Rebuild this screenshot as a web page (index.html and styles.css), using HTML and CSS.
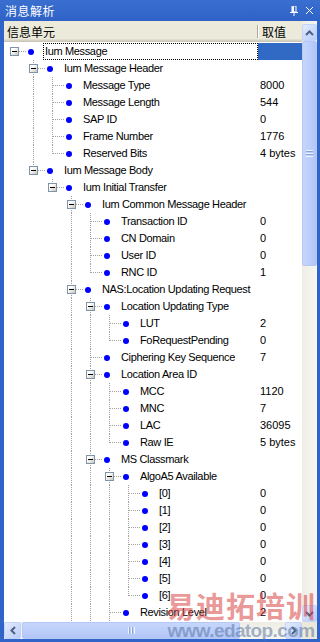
FILE: index.html
```html
<!DOCTYPE html>
<html lang="zh">
<head>
    <meta charset="UTF-8">
    <meta name="viewport" content="width=device-width, initial-scale=1.0">
    <title>消息解析</title>
    <link rel="stylesheet" href="styles.css">
</head>
<body>
<div class="window">
    <div class="titlebar">
        <span class="title">消息解析</span>
        <span class="tb-icons">
            <svg width="9" height="10" viewBox="0 0 9 10"><path d="M2 0h4v6H2z M3 1v4" fill="none" stroke="#fff" stroke-width="1"/><path d="M2.5 0.5v5.5M3.5 0.5v5.5" stroke="#fff"/><path d="M0 6.5h8M4 7v3" stroke="#fff"/></svg>
            <svg width="9" height="9" viewBox="0 0 9 9"><path d="M1 1l7 7M8 1l-7 7" stroke="#fff" stroke-width="1"/></svg>
        </span>
    </div>
    <div class="pane">
        <div class="view">
            <div class="header">
                <div class="hname">信息单元</div>
                <div class="hval">取值</div>
            </div>
            <div class="tree">
                <div class="row sel"><div class="name"><i class="con root"><b class="box"></b></i><i class="dot"></i><span class="label">Ium Message</span></div><div class="val"></div></div>
                <div class="row"><div class="name"><i class="ind"></i><i class="con mid"><b class="box"></b></i><i class="dot"></i><span class="label">Ium Message Header</span></div><div class="val"></div></div>
                <div class="row"><div class="name"><i class="ind"></i><i class="ind v"></i><i class="con mid"></i><i class="dot"></i><span class="label">Message Type</span></div><div class="val">8000</div></div>
                <div class="row"><div class="name"><i class="ind"></i><i class="ind v"></i><i class="con mid"></i><i class="dot"></i><span class="label">Message Length</span></div><div class="val">544</div></div>
                <div class="row"><div class="name"><i class="ind"></i><i class="ind v"></i><i class="con mid"></i><i class="dot"></i><span class="label">SAP ID</span></div><div class="val">0</div></div>
                <div class="row"><div class="name"><i class="ind"></i><i class="ind v"></i><i class="con mid"></i><i class="dot"></i><span class="label">Frame Number</span></div><div class="val">1776</div></div>
                <div class="row"><div class="name"><i class="ind"></i><i class="ind v"></i><i class="con last"></i><i class="dot"></i><span class="label">Reserved Bits</span></div><div class="val">4 bytes</div></div>
                <div class="row"><div class="name"><i class="ind"></i><i class="con last"><b class="box"></b></i><i class="dot"></i><span class="label">Ium Message Body</span></div><div class="val"></div></div>
                <div class="row"><div class="name"><i class="ind"></i><i class="ind"></i><i class="con last"><b class="box"></b></i><i class="dot"></i><span class="label">Ium Initial Transfer</span></div><div class="val"></div></div>
                <div class="row"><div class="name"><i class="ind"></i><i class="ind"></i><i class="ind"></i><i class="con mid"><b class="box"></b></i><i class="dot"></i><span class="label">Ium Common Message Header</span></div><div class="val"></div></div>
                <div class="row"><div class="name"><i class="ind"></i><i class="ind"></i><i class="ind"></i><i class="ind v"></i><i class="con mid"></i><i class="dot"></i><span class="label">Transaction ID</span></div><div class="val">0</div></div>
                <div class="row"><div class="name"><i class="ind"></i><i class="ind"></i><i class="ind"></i><i class="ind v"></i><i class="con mid"></i><i class="dot"></i><span class="label">CN Domain</span></div><div class="val">0</div></div>
                <div class="row"><div class="name"><i class="ind"></i><i class="ind"></i><i class="ind"></i><i class="ind v"></i><i class="con mid"></i><i class="dot"></i><span class="label">User ID</span></div><div class="val">0</div></div>
                <div class="row"><div class="name"><i class="ind"></i><i class="ind"></i><i class="ind"></i><i class="ind v"></i><i class="con last"></i><i class="dot"></i><span class="label">RNC ID</span></div><div class="val">1</div></div>
                <div class="row"><div class="name"><i class="ind"></i><i class="ind"></i><i class="ind"></i><i class="con mid"><b class="box"></b></i><i class="dot"></i><span class="label">NAS:Location Updating Request</span></div><div class="val"></div></div>
                <div class="row"><div class="name"><i class="ind"></i><i class="ind"></i><i class="ind"></i><i class="ind v"></i><i class="con mid"><b class="box"></b></i><i class="dot"></i><span class="label">Location Updating Type</span></div><div class="val"></div></div>
                <div class="row"><div class="name"><i class="ind"></i><i class="ind"></i><i class="ind"></i><i class="ind v"></i><i class="ind v"></i><i class="con mid"></i><i class="dot"></i><span class="label">LUT</span></div><div class="val">2</div></div>
                <div class="row"><div class="name"><i class="ind"></i><i class="ind"></i><i class="ind"></i><i class="ind v"></i><i class="ind v"></i><i class="con last"></i><i class="dot"></i><span class="label">FoRequestPending</span></div><div class="val">0</div></div>
                <div class="row"><div class="name"><i class="ind"></i><i class="ind"></i><i class="ind"></i><i class="ind v"></i><i class="con mid"></i><i class="dot"></i><span class="label">Ciphering Key Sequence</span></div><div class="val">7</div></div>
                <div class="row"><div class="name"><i class="ind"></i><i class="ind"></i><i class="ind"></i><i class="ind v"></i><i class="con mid"><b class="box"></b></i><i class="dot"></i><span class="label">Location Area ID</span></div><div class="val"></div></div>
                <div class="row"><div class="name"><i class="ind"></i><i class="ind"></i><i class="ind"></i><i class="ind v"></i><i class="ind v"></i><i class="con mid"></i><i class="dot"></i><span class="label">MCC</span></div><div class="val">1120</div></div>
                <div class="row"><div class="name"><i class="ind"></i><i class="ind"></i><i class="ind"></i><i class="ind v"></i><i class="ind v"></i><i class="con mid"></i><i class="dot"></i><span class="label">MNC</span></div><div class="val">7</div></div>
                <div class="row"><div class="name"><i class="ind"></i><i class="ind"></i><i class="ind"></i><i class="ind v"></i><i class="ind v"></i><i class="con mid"></i><i class="dot"></i><span class="label">LAC</span></div><div class="val">36095</div></div>
                <div class="row"><div class="name"><i class="ind"></i><i class="ind"></i><i class="ind"></i><i class="ind v"></i><i class="ind v"></i><i class="con last"></i><i class="dot"></i><span class="label">Raw IE</span></div><div class="val">5 bytes</div></div>
                <div class="row"><div class="name"><i class="ind"></i><i class="ind"></i><i class="ind"></i><i class="ind v"></i><i class="con mid"><b class="box"></b></i><i class="dot"></i><span class="label">MS Classmark</span></div><div class="val"></div></div>
                <div class="row"><div class="name"><i class="ind"></i><i class="ind"></i><i class="ind"></i><i class="ind v"></i><i class="ind v"></i><i class="con mid"><b class="box"></b></i><i class="dot"></i><span class="label">AlgoA5 Available</span></div><div class="val"></div></div>
                <div class="row"><div class="name"><i class="ind"></i><i class="ind"></i><i class="ind"></i><i class="ind v"></i><i class="ind v"></i><i class="ind v"></i><i class="con mid"></i><i class="dot"></i><span class="label">[0]</span></div><div class="val">0</div></div>
                <div class="row"><div class="name"><i class="ind"></i><i class="ind"></i><i class="ind"></i><i class="ind v"></i><i class="ind v"></i><i class="ind v"></i><i class="con mid"></i><i class="dot"></i><span class="label">[1]</span></div><div class="val">0</div></div>
                <div class="row"><div class="name"><i class="ind"></i><i class="ind"></i><i class="ind"></i><i class="ind v"></i><i class="ind v"></i><i class="ind v"></i><i class="con mid"></i><i class="dot"></i><span class="label">[2]</span></div><div class="val">0</div></div>
                <div class="row"><div class="name"><i class="ind"></i><i class="ind"></i><i class="ind"></i><i class="ind v"></i><i class="ind v"></i><i class="ind v"></i><i class="con mid"></i><i class="dot"></i><span class="label">[3]</span></div><div class="val">0</div></div>
                <div class="row"><div class="name"><i class="ind"></i><i class="ind"></i><i class="ind"></i><i class="ind v"></i><i class="ind v"></i><i class="ind v"></i><i class="con mid"></i><i class="dot"></i><span class="label">[4]</span></div><div class="val">0</div></div>
                <div class="row"><div class="name"><i class="ind"></i><i class="ind"></i><i class="ind"></i><i class="ind v"></i><i class="ind v"></i><i class="ind v"></i><i class="con mid"></i><i class="dot"></i><span class="label">[5]</span></div><div class="val">0</div></div>
                <div class="row"><div class="name"><i class="ind"></i><i class="ind"></i><i class="ind"></i><i class="ind v"></i><i class="ind v"></i><i class="ind v"></i><i class="con last"></i><i class="dot"></i><span class="label">[6]</span></div><div class="val">0</div></div>
                <div class="row"><div class="name"><i class="ind"></i><i class="ind"></i><i class="ind"></i><i class="ind v"></i><i class="ind v"></i><i class="con mid"></i><i class="dot"></i><span class="label">Revision Level</span></div><div class="val">2</div></div>
            </div>
        </div>
        <div class="vscroll">
            <div class="sbtn">
                <svg width="9" height="6" viewBox="0 0 9 6"><path d="M1 5l3.5-3.5L8 5" fill="none" stroke="#4d6185" stroke-width="2"/></svg>
            </div>
            <div class="vthumb"><span class="grip-v"></span></div>
            <div class="track"></div>
            <div class="sbtn">
                <svg width="9" height="6" viewBox="0 0 9 6"><path d="M1 1l3.5 3.5L8 1" fill="none" stroke="#4d6185" stroke-width="2"/></svg>
            </div>
        </div>
        <div class="hscroll">
            <div class="sbtn">
                <svg width="6" height="9" viewBox="0 0 6 9"><path d="M5 1L1.5 4.5L5 8" fill="none" stroke="#4d6185" stroke-width="2"/></svg>
            </div>
            <div class="hthumb"><span class="grip-h"></span></div>
            <div class="track"></div>
            <div class="sbtn">
                <svg width="6" height="9" viewBox="0 0 6 9"><path d="M1 1l3.5 3.5L1 8" fill="none" stroke="#4d6185" stroke-width="2"/></svg>
            </div>
        </div>
        <div class="corner"></div>
    </div>
    <div class="watermark">
        <div class="wm-cn">易迪拓培训</div>
        <div class="wm-url">www.edatop.com</div>
    </div>
</div>
</body>
</html>
```

FILE: styles.css
```css
body {
    margin: 0;
    padding: 0;
    font-family: "Liberation Sans", Arial, "Noto Sans CJK SC", sans-serif;
    font-size: 11px;
    color: #000;
}

.window {
    position: relative;
    width: 320px;
    height: 642px;
    background: #3064c8;
    display: flex;
    flex-direction: column;
    overflow: hidden;
}

/* title bar */
.titlebar {
    height: 21px;
    flex: none;
    display: flex;
    align-items: center;
    justify-content: space-between;
    padding: 0 6px 0 5px;
    background: linear-gradient(to bottom, #3a6fd0, #2f62c6);
    color: #fff;
}

.title {
    font-family: "Noto Sans CJK SC", sans-serif;
    font-size: 12px;
    letter-spacing: 0.5px;
    line-height: 21px;
}

.tb-icons {
    display: flex;
    align-items: center;
    gap: 6px;
}

/* main pane */
.pane {
    flex: 1;
    margin: 0 3px 3px 4px;
    display: grid;
    grid-template-columns: 298px 15px;
    grid-template-rows: 1fr 17px;
    background: #fff;
    min-height: 0;
}

.view {
    display: flex;
    flex-direction: column;
    overflow: hidden;
}

.header {
    height: 21px;
    flex: none;
    display: flex;
    font-family: "Noto Sans CJK SC", sans-serif;
    font-size: 12px;
    background: linear-gradient(to bottom, #ebeadb 0 18px, #e2decd 18px 19px, #d6d2c2 19px 20px, #cbc7b8 20px 21px);
}

.hname {
    width: 253px;
    padding: 1px 0 0 3px;
    box-sizing: border-box;
    line-height: 19px;
}

.hval {
    flex: 1;
    padding: 1px 0 0 5px;
    line-height: 19px;
    background:
        linear-gradient(#aca899, #aca899) no-repeat 0 4px / 1px 13px,
        linear-gradient(#fff, #fff) no-repeat 1px 4px / 1px 13px;
}

.tree {
    flex: 1;
    padding-top: 1px;
    overflow: hidden;
}

.row {
    display: flex;
    height: 17px;
}

.name {
    width: 254px;
    flex: none;
    display: flex;
    align-items: center;
    padding-left: 1px;
    box-sizing: border-box;
    overflow: hidden;
}

.ind {
    width: 19px;
    height: 17px;
    flex: none;
}

.ind.v {
    background: repeating-linear-gradient(to bottom, #a0a0a0 0 1px, transparent 1px 2px) no-repeat 9px 0 / 1px 17px;
}

.con {
    width: 22px;
    height: 17px;
    flex: none;
    display: flex;
    align-items: center;
    background-repeat: no-repeat;
}

.con.mid {
    background-image:
        repeating-linear-gradient(to bottom, #a0a0a0 0 1px, transparent 1px 2px),
        repeating-linear-gradient(to right, #a0a0a0 0 1px, transparent 1px 2px);
    background-size: 1px 17px, 12px 1px;
    background-position: 9px 0, 10px 8px;
}

.con.last {
    background-image:
        repeating-linear-gradient(to bottom, #a0a0a0 0 1px, transparent 1px 2px),
        repeating-linear-gradient(to right, #a0a0a0 0 1px, transparent 1px 2px);
    background-size: 1px 9px, 12px 1px;
    background-position: 9px 0, 10px 8px;
}

.con.root {
    background-image: repeating-linear-gradient(to right, #a0a0a0 0 1px, transparent 1px 2px);
    background-size: 12px 1px;
    background-position: 10px 8px;
}

.box {
    width: 9px;
    height: 9px;
    margin-left: 5px;
    box-sizing: border-box;
    border: 1px solid #7f94a8;
    background: linear-gradient(135deg, #ffffff 30%, #c9c6b8);
    display: flex;
    align-items: center;
    justify-content: center;
}

.box::after {
    content: "";
    width: 5px;
    height: 1px;
    background: #000;
}

.dot {
    width: 6px;
    height: 6px;
    flex: none;
    margin-left: 1px;
    border-radius: 50%;
    background: #0000ff;
}

.label {
    flex: none;
    margin-left: 9px;
    padding: 0 1px;
    border: 1px solid transparent;
    line-height: 15px;
    letter-spacing: -0.35px;
    white-space: nowrap;
}

.row.sel .label {
    flex: 1;
    border: 1px dotted #000;
}

.val {
    flex: 1;
    padding-left: 2px;
    line-height: 17px;
    white-space: nowrap;
    overflow: hidden;
}

.row.sel .val {
    background: #316ac5;
}

/* scrollbars */
.vscroll {
    grid-row: 1 / 2;
    grid-column: 2;
    display: flex;
    flex-direction: column;
    padding-top: 3px;
    background: linear-gradient(to right, #eeede5, #f7f6f2);
}

.hscroll {
    grid-row: 2;
    grid-column: 1;
    display: flex;
    background: linear-gradient(to bottom, #eeede5, #f7f6f2);
}

.corner {
    grid-row: 2;
    grid-column: 2;
    background: #ece9d8;
}

.sbtn {
    flex: none;
    width: 15px;
    height: 17px;
    box-sizing: border-box;
    border: 1px solid #c3d3fd;
    border-radius: 2px;
    background: linear-gradient(135deg, #e3ebfe, #b9ccf8);
    display: flex;
    align-items: center;
    justify-content: center;
}

.hscroll .sbtn {
    width: 17px;
    height: 17px;
}

.vthumb {
    flex: none;
    height: 225px;
    box-sizing: border-box;
    border: 1px solid #b4c7f5;
    border-radius: 2px;
    background: linear-gradient(to right, #c6d6fc, #bacdfa 60%, #b1c5f7);
    display: flex;
    align-items: center;
    justify-content: center;
}

.hthumb {
    flex: none;
    width: 218px;
    margin-left: 1px;
    box-sizing: border-box;
    border: 1px solid #b4c7f5;
    border-radius: 2px;
    background: linear-gradient(to bottom, #c6d6fc, #bacdfa 60%, #b1c5f7);
    display: flex;
    align-items: center;
    justify-content: center;
}

.grip-v {
    width: 7px;
    height: 7px;
    background: repeating-linear-gradient(to bottom, #eef3fe 0 1px, #8da4d8 1px 2px, transparent 2px 3px);
}

.grip-h {
    width: 7px;
    height: 7px;
    background: repeating-linear-gradient(to right, #eef3fe 0 1px, #8da4d8 1px 2px, transparent 2px 3px);
}

.track {
    flex: 1;
}

/* watermark over the lower right corner */
.watermark {
    position: absolute;
    right: 4px;
    bottom: 1px;
    width: 150px;
    pointer-events: none;
    font-weight: bold;
    text-align: center;
}

.wm-cn {
    font-family: "Noto Sans CJK SC", sans-serif;
    font-size: 29px;
    line-height: 32px;
    letter-spacing: 1px;
    color: rgba(216, 64, 64, 0.55);
}

.wm-url {
    font-family: "Liberation Sans", Arial, sans-serif;
    font-size: 19px;
    line-height: 20px;
    letter-spacing: -0.6px;
    color: rgba(88, 118, 160, 0.55);
}
```
